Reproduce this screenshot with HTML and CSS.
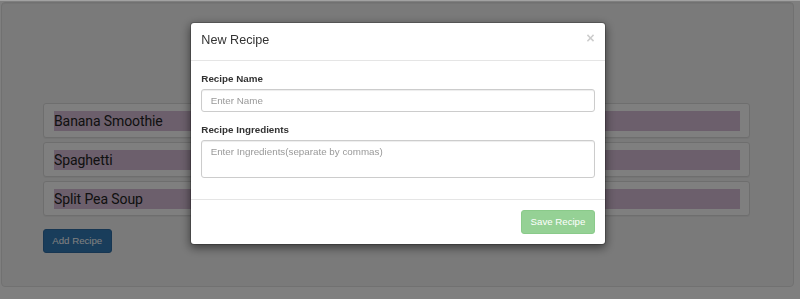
FILE: index.html
```html
<!DOCTYPE html>
<html>
<head>
<meta charset="utf-8">
<title>Recipe Box</title>
<link rel="stylesheet" href="styles.css">
</head>
<body>
  <div class="page">
    <div class="well">
      <ul class="recipes">
        <li class="panel"><div class="recipe-title">Banana Smoothie</div></li>
        <li class="panel"><div class="recipe-title">Spaghetti</div></li>
        <li class="panel"><div class="recipe-title">Split Pea Soup</div></li>
      </ul>
      <button class="btn btn-primary" type="button">Add Recipe</button>
    </div>
  </div>

  <div class="backdrop"></div>

  <div class="modal-dialog">
    <div class="modal-content">
      <div class="modal-header">
        <button class="close" type="button">&times;</button>
        <h4 class="modal-title">New Recipe</h4>
      </div>
      <div class="modal-body">
        <div class="form-group">
          <label class="form-label">Recipe Name</label>
          <input class="form-control" type="text" placeholder="Enter Name">
        </div>
        <div class="form-group">
          <label class="form-label">Recipe Ingredients</label>
          <textarea class="form-control textarea" placeholder="Enter Ingredients(separate by commas)"></textarea>
        </div>
      </div>
      <div class="modal-footer">
        <button class="btn btn-success" type="button" disabled>Save Recipe</button>
      </div>
    </div>
  </div>
</body>
</html>
```

FILE: styles.css
```css
* {
  box-sizing: border-box;
}

html, body {
  margin: 0;
  padding: 0;
  background: #ffffff;
  height: 100%;
  overflow: hidden;
}

body {
  font-family: "Liberation Sans", Arial, sans-serif;
  color: #333333;
  border-top: 1px solid #a2a2a2;
}

.page {
  padding: 1px 6px 0 1px;
}

.well {
  width: 793px;
  height: 285px;
  background: #f5f5f5;
  border: 1px solid #e3e3e3;
  border-radius: 4px;
  box-shadow: inset 0 1px 1px rgba(0, 0, 0, 0.05);
  padding: 100px 43px 32px 41px;
}

.recipes {
  list-style: none;
  margin: 0 0 13px 0;
  padding: 0;
  display: flex;
  flex-direction: column;
  gap: 4px;
}

.panel {
  height: 35px;
  background: #ffffff;
  border: 1px solid #dddddd;
  border-radius: 3px;
  box-shadow: 0 1px 1px rgba(0, 0, 0, 0.05);
  padding: 7px 9px 0 10px;
}

.recipe-title {
  background: #d8bfd8;
  height: 20px;
  line-height: 21px;
  font-family: Roboto, "Noto Sans", sans-serif;
  font-size: 14px;
  color: #222222;
  letter-spacing: -0.1px;
}

.btn {
  display: inline-block;
  font-family: "Liberation Sans", Arial, sans-serif;
  font-size: 9.66px;
  line-height: 13.8px;
  padding: 4.1px 8.3px;
  border: 1px solid transparent;
  border-radius: 3px;
  color: #ffffff;
  margin: 0;
  cursor: pointer;
}

.btn-primary {
  background: #337ab7;
  border-color: #2e6da4;
}

.btn-success {
  background: #5cb85c;
  border-color: #4cae4c;
  opacity: 0.65;
}

.backdrop {
  position: fixed;
  top: 1px;
  left: 0;
  right: 0;
  bottom: 0;
  background: rgba(0, 0, 0, 0.5);
}

.modal-dialog {
  position: fixed;
  top: 22px;
  left: 190px;
  width: 416px;
}

.modal-content {
  background: #ffffff;
  border: 1px solid rgba(0, 0, 0, 0.2);
  border-radius: 4px;
  box-shadow: 0 3px 10px rgba(0, 0, 0, 0.5);
  background-clip: padding-box;
}

.modal-header {
  padding: 9.35px 10.35px 10.35px 10.35px;
  border-bottom: 1px solid #e5e5e5;
}

.modal-title {
  margin: 0;
  font-size: 12.6px;
  font-weight: normal;
  line-height: 17.7px;
  color: #333333;
}

.close {
  float: right;
  font-family: "Liberation Sans", Arial, sans-serif;
  font-size: 14.5px;
  font-weight: bold;
  line-height: 1;
  color: #000000;
  opacity: 0.2;
  background: transparent;
  border: 0;
  padding: 0;
  margin-top: -1px;
}

.modal-body {
  padding: 10.35px;
}

.form-group {
  margin-bottom: 10.35px;
}

.form-label {
  display: block;
  font-size: 9.8px;
  line-height: 13.8px;
  font-weight: bold;
  margin-bottom: 3.45px;
  color: #333333;
}

.form-control {
  display: block;
  width: 100%;
  height: 23.5px;
  padding: 4.1px 8.3px;
  font-family: "Liberation Sans", Arial, sans-serif;
  font-size: 9.8px;
  line-height: 13.8px;
  color: #555555;
  background: #ffffff;
  border: 1px solid #cccccc;
  border-radius: 3px;
  box-shadow: inset 0 1px 1px rgba(0, 0, 0, 0.075);
  margin: 0;
}

.form-control::placeholder {
  color: #999999;
}

.textarea {
  height: 38px;
  resize: none;
}

.modal-footer {
  padding: 10.35px;
  border-top: 1px solid #e5e5e5;
  text-align: right;
}
```
